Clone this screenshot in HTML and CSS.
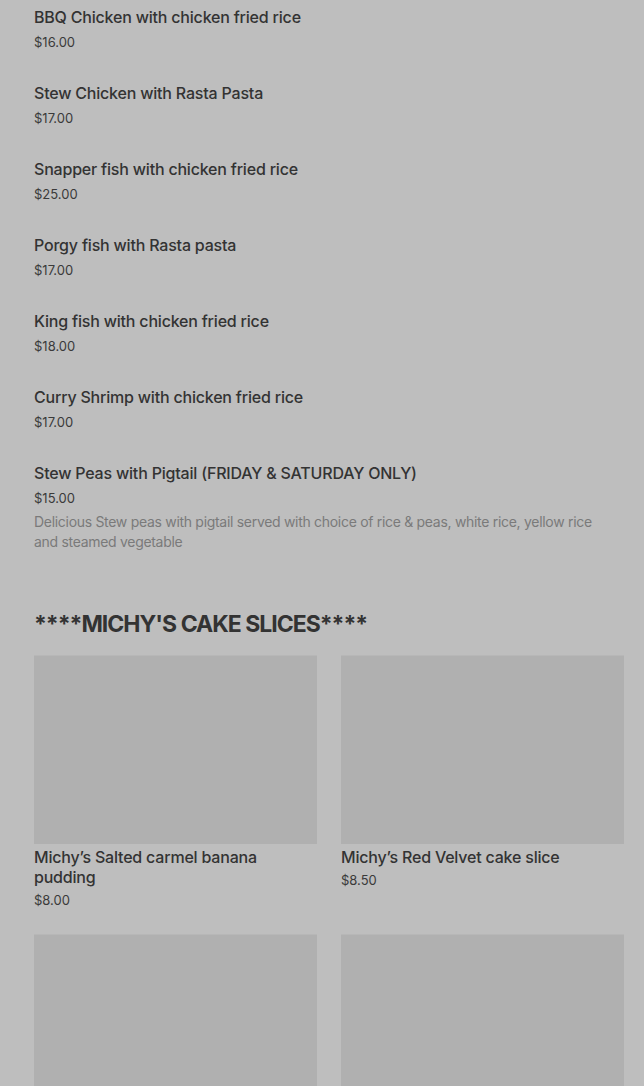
FILE: index.html
```html
<!DOCTYPE html>
<html lang="en">
<head>
    <meta charset="UTF-8">
    <meta name="viewport" content="width=device-width, initial-scale=1.0">
    <title>Menu</title>
    <link rel="stylesheet" href="styles.css">
</head>
<body>
    <div class="menu">
        <div class="item">
            <div class="item-name">BBQ Chicken with chicken fried rice</div>
            <div class="item-price">$16.00</div>
        </div>
        <div class="item">
            <div class="item-name">Stew Chicken with Rasta Pasta</div>
            <div class="item-price">$17.00</div>
        </div>
        <div class="item">
            <div class="item-name">Snapper fish with chicken fried rice</div>
            <div class="item-price">$25.00</div>
        </div>
        <div class="item">
            <div class="item-name">Porgy fish with Rasta pasta</div>
            <div class="item-price">$17.00</div>
        </div>
        <div class="item">
            <div class="item-name">King fish with chicken fried rice</div>
            <div class="item-price">$18.00</div>
        </div>
        <div class="item">
            <div class="item-name">Curry Shrimp with chicken fried rice</div>
            <div class="item-price">$17.00</div>
        </div>
        <div class="item last">
            <div class="item-name">Stew Peas with Pigtail (FRIDAY &amp; SATURDAY ONLY)</div>
            <div class="item-price">$15.00</div>
            <div class="item-desc">Delicious Stew peas with pigtail served with choice of rice &amp; peas, white rice, yellow rice and steamed vegetable</div>
        </div>

        <h2 class="section-title">****MICHY'S CAKE SLICES****</h2>
        <div class="cards">
            <div class="card">
                <div class="card-img"></div>
                <div class="item-name">Michy’s Salted carmel banana pudding</div>
                <div class="item-price">$8.00</div>
            </div>
            <div class="card">
                <div class="card-img"></div>
                <div class="item-name">Michy’s Red Velvet cake slice</div>
                <div class="item-price">$8.50</div>
            </div>
            <div class="card">
                <div class="card-img"></div>
            </div>
            <div class="card">
                <div class="card-img"></div>
            </div>
        </div>
    </div>
</body>
</html>
```

FILE: styles.css
```css
body {
    margin: 0;
    background-color: #bebebe;
    font-family: Inter, "Noto Sans", sans-serif;
    color: #333;
}
.menu {
    padding: 7px 20px 0 34px;
}
.item {
    padding-bottom: 31px;
}
.item.last {
    padding-bottom: 56px;
}
.item-name {
    font-size: 16px;
    font-weight: 500;
    line-height: 20px;
    letter-spacing: -0.2px;
    color: #333;
}
.item-price {
    margin-top: 5px;
    font-size: 13px;
    line-height: 20px;
    color: #3a3a3a;
}
.item-desc {
    margin-top: 4px;
    font-size: 14px;
    line-height: 20px;
    color: #7a7a7a;
    letter-spacing: -0.3px;
    padding-right: 10px;
}
.section-title {
    margin: 0 0 15px;
    font-size: 23px;
    line-height: 32px;
    font-weight: 700;
    letter-spacing: -1px;
    color: #333;
}
.cards {
    display: grid;
    grid-template-columns: repeat(2, 1fr);
    column-gap: 24px;
    row-gap: 24px;
}
.card-img {
    height: 188px;
    background: #b0b0b0;
    border-top: 1px solid #b7b7b7;
    margin-bottom: 3px;
}
.card .item-price {
    margin-top: 3px;
}
```
